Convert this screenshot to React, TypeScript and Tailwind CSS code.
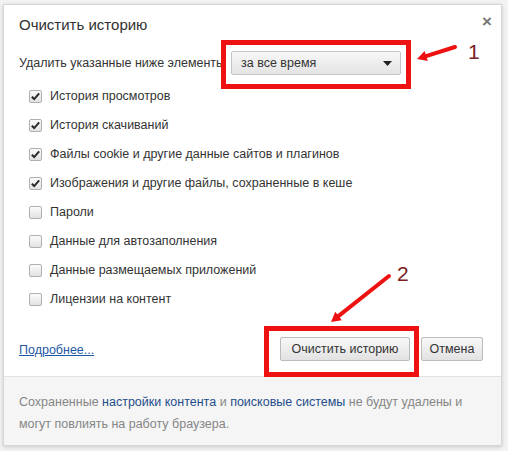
import React from "react";

const ITEMS = [
  { label: "История просмотров", checked: true },
  { label: "История скачиваний", checked: true },
  { label: "Файлы cookie и другие данные сайтов и плагинов", checked: true },
  { label: "Изображения и другие файлы, сохраненные в кеше", checked: true },
  { label: "Пароли", checked: false },
  { label: "Данные для автозаполнения", checked: false },
  { label: "Данные размещаемых приложений", checked: false },
  { label: "Лицензии на контент", checked: false },
];

function Checkbox({ checked }: { checked: boolean }) {
  return (
    <span className="relative flex h-[13px] w-[13px] items-center justify-center rounded-[2px] border border-[#b0b0b0] bg-gradient-to-b from-[#fbfbfb] to-[#e2e2e2]">
      {checked && (
        <svg viewBox="0 0 12 12" className="h-[11px] w-[11px]">
          <path d="M2 6.2 L4.6 8.8 L10 2.6" fill="none" stroke="#2a2a2a" strokeWidth="2.2" />
        </svg>
      )}
    </span>
  );
}

function Arrow({ className, x1, y1, x2, y2, w, h }: { className: string; x1: number; y1: number; x2: number; y2: number; w: number; h: number }) {
  const ang = Math.atan2(y2 - y1, x2 - x1);
  const len = 11;
  const spread = 0.5;
  const ax = x2 - len * Math.cos(ang - spread);
  const ay = y2 - len * Math.sin(ang - spread);
  const bx = x2 - len * Math.cos(ang + spread);
  const by = y2 - len * Math.sin(ang + spread);
  const mx = x2 - 7 * Math.cos(ang);
  const my = y2 - 7 * Math.sin(ang);
  return (
    <svg className={className} width={w} height={h} viewBox={`0 0 ${w} ${h}`}>
      <line x1={x1} y1={y1} x2={mx} y2={my} stroke="#ee1111" strokeWidth="4" strokeLinecap="round" />
      <polygon points={`${x2},${y2} ${ax},${ay} ${bx},${by}`} fill="#ee1111" />
    </svg>
  );
}

export default function App() {
  return (
    <div className="relative h-[451px] w-[508px] overflow-hidden bg-[#f3f3f3] pl-[3px] pt-[4px] font-['Liberation_Sans',Arial,sans-serif] text-[12.5px] text-[#333]">
      <div className="flex h-[442px] w-[499px] flex-col border border-[#d6d6d6] bg-white shadow-[0_1px_4px_rgba(0,0,0,0.18)]">
        <div className="flex h-[371px] flex-col px-[15px] pt-[11px]">
          <div className="flex items-start justify-between">
            <h1 className="text-[15px] leading-[18px] text-[#303030]">Очистить историю</h1>
            <span className="mr-[-6px] mt-[-2px] text-[17px] font-bold leading-[16px] text-[#777]">×</span>
          </div>

          <div className="mt-[17px] flex h-[24px] items-center">
            <span className="w-[212px] whitespace-nowrap">Удалить указанные ниже элементы</span>
            <div className="flex h-[24px] w-[170px] items-center justify-between rounded-[2px] border border-[#c4c4c4] bg-gradient-to-b from-[#f7f7f7] to-[#e4e4e4] pl-[9px] pr-[8px]">
              <span>за все время</span>
              <svg width="9" height="5" viewBox="0 0 9 5">
                <polygon points="0,0 9,0 4.5,5" fill="#222" />
              </svg>
            </div>
          </div>

          <ul className="mt-[7px] flex flex-col">
            {ITEMS.map((item) => (
              <li key={item.label} className="flex h-[29px] items-center gap-[8px] pl-[10px]">
                <Checkbox checked={item.checked} />
                <span>{item.label}</span>
              </li>
            ))}
          </ul>

          <div className="mt-[23px] flex h-[24px] items-center justify-between pr-[3px]">
            <a className="mt-[2px] text-[#1d57a6] underline">Подробнее...</a>
            <div className="flex gap-[11px]">
              <button className="h-[24px] w-[130px] rounded-[2px] border border-[#bcbcbc] bg-gradient-to-b from-[#f8f8f8] to-[#e2e2e2] text-[#333]">
                Очистить историю
              </button>
              <button className="h-[24px] w-[62px] rounded-[2px] border border-[#bcbcbc] bg-gradient-to-b from-[#f8f8f8] to-[#e2e2e2] text-[#333]">
                Отмена
              </button>
            </div>
          </div>
        </div>

        <div className="flex-1 border-t border-[#e3e3e3] bg-[#f5f5f5] px-[15px] pt-[14px] leading-[22px] text-[#858585]">
          <p>
            Сохраненные <span className="text-[#1f4d8a]">настройки контента</span> и{" "}
            <span className="text-[#1f4d8a]">поисковые системы</span> не будут удалены и
            <br />
            могут повлиять на работу браузера.
          </p>
        </div>
      </div>

      <div className="absolute left-[221px] top-[40px] h-[49px] w-[190px] border-[5px] border-[#ee1111]" />
      <div className="absolute left-[264px] top-[326px] h-[51px] w-[155px] border-[5px] border-[#ee1111]" />

      <Arrow className="absolute left-[410px] top-[38px]" w={52} h={28} x1={45} y1={9} x2={7} y2={21} />
      <span className="absolute left-[468px] top-[40px] text-[21px] leading-[24px] text-[#7a2020]">1</span>

      <Arrow className="absolute left-[325px] top-[268px]" w={72} h={60} x1={64} y1={8} x2={6} y2={54} />
      <span className="absolute left-[397px] top-[262px] text-[21px] leading-[24px] text-[#7a2020]">2</span>
    </div>
  );
}
